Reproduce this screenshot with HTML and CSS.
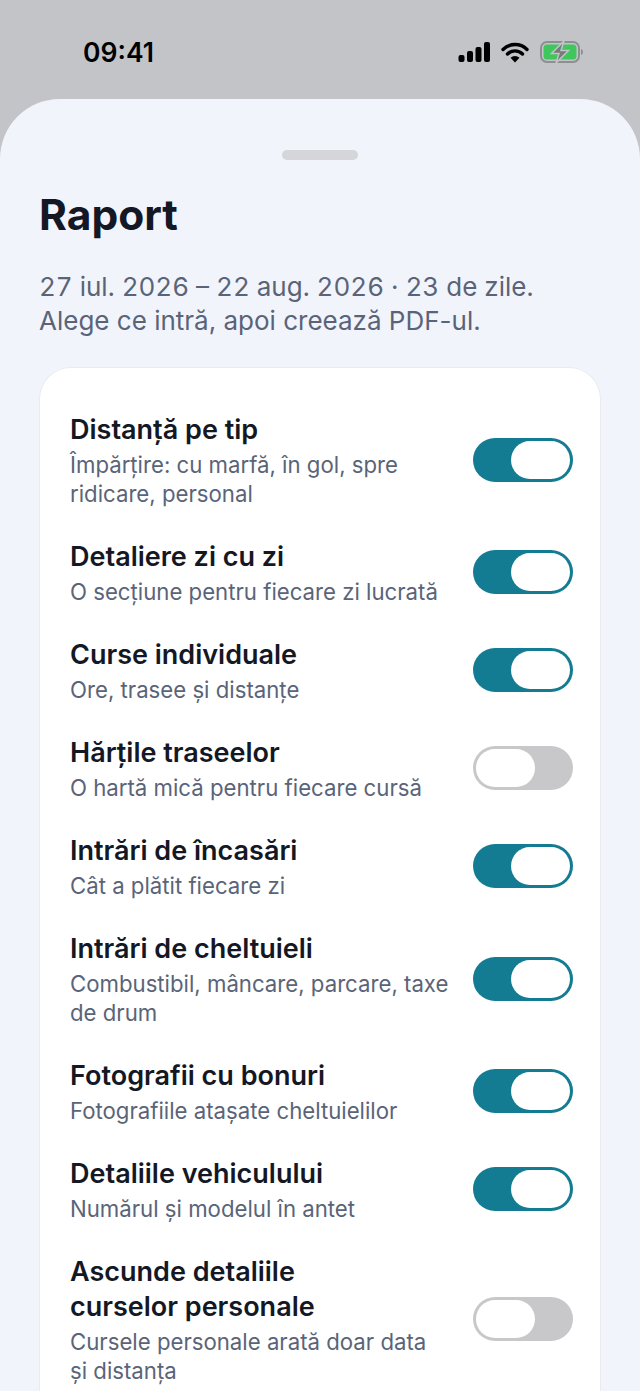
FILE: index.html
```html
<!DOCTYPE html>
<html lang="ro">
<head>
    <meta charset="UTF-8">
    <meta name="viewport" content="width=device-width, initial-scale=1.0">
    <title>Raport</title>
    <link rel="stylesheet" href="styles.css">
</head>
<body>
<!-- Status bar -->
<div class="status-bar">
    <span class="clock">09:41</span>
    <div class="status-icons">
        <svg width="32" height="20" viewBox="0 0 32 20">
            <rect x="0.500" y="13" width="6" height="7" rx="2" fill="#000"/>
            <rect x="9" y="9" width="6" height="11" rx="2" fill="#000"/>
            <rect x="17.500" y="5" width="6" height="15" rx="2" fill="#000"/>
            <rect x="26" y="0" width="6" height="20" rx="2" fill="#000"/>
        </svg>
        <svg width="28" height="21" viewBox="0 0 28 21">
            <path d="M2 7.5a17 17 0 0 1 24 0M6.5 12a10.500 10.500 0 0 1 15 0" fill="none" stroke="#000" stroke-width="3.4" stroke-linecap="round"/>
            <path d="M14 20.500l-4.500-4.800a6.500 6.500 0 0 1 9 0z" fill="#000"/>
        </svg>
        <svg width="44" height="24" viewBox="0 0 44 24">
            <rect x="1" y="2" width="38" height="20" rx="6" fill="none" stroke="#8e8f91" stroke-width="2"/>
            <rect x="3.500" y="4.500" width="33" height="15" rx="3.500" fill="#3fc65c"/>
            <path d="M41 9c1.500.5 2 1.500 2 3s-.5 2.500-2 3z" fill="#8e8f91"/>
            <path d="M24 1L11.500 13.500h7.500l-3 9.500L28.500 10.500h-7.500z" fill="#77797b" stroke="#c3c4c8" stroke-width="1.500"/>
        </svg>
    </div>
</div>

<!-- Report sheet -->
<div class="sheet">
    <div class="handle"></div>
    <h1>Raport</h1>
    <p class="intro"><span class="dates">27 iul. 2026 – 22 aug. 2026 · 23 de zile.</span><br>Alege ce intră, apoi creează PDF-ul.</p>

    <div class="card">
        <div class="row">
            <div class="row-text">
                <div class="row-title">Distanță pe tip</div>
                <div class="row-sub">Împărțire: cu marfă, în gol, spre<br>ridicare, personal</div>
            </div>
            <div class="toggle on"><div class="knob"></div></div>
        </div>
        <div class="row">
            <div class="row-text">
                <div class="row-title">Detaliere zi cu zi</div>
                <div class="row-sub">O secțiune pentru fiecare zi lucrată</div>
            </div>
            <div class="toggle on"><div class="knob"></div></div>
        </div>
        <div class="row">
            <div class="row-text">
                <div class="row-title">Curse individuale</div>
                <div class="row-sub">Ore, trasee și distanțe</div>
            </div>
            <div class="toggle on"><div class="knob"></div></div>
        </div>
        <div class="row">
            <div class="row-text">
                <div class="row-title">Hărțile traseelor</div>
                <div class="row-sub">O hartă mică pentru fiecare cursă</div>
            </div>
            <div class="toggle"><div class="knob"></div></div>
        </div>
        <div class="row">
            <div class="row-text">
                <div class="row-title">Intrări de încasări</div>
                <div class="row-sub">Cât a plătit fiecare zi</div>
            </div>
            <div class="toggle on"><div class="knob"></div></div>
        </div>
        <div class="row">
            <div class="row-text">
                <div class="row-title">Intrări de cheltuieli</div>
                <div class="row-sub">Combustibil, mâncare, parcare, taxe<br>de drum</div>
            </div>
            <div class="toggle on"><div class="knob"></div></div>
        </div>
        <div class="row">
            <div class="row-text">
                <div class="row-title">Fotografii cu bonuri</div>
                <div class="row-sub">Fotografiile atașate cheltuielilor</div>
            </div>
            <div class="toggle on"><div class="knob"></div></div>
        </div>
        <div class="row">
            <div class="row-text">
                <div class="row-title">Detaliile vehiculului</div>
                <div class="row-sub">Numărul și modelul în antet</div>
            </div>
            <div class="toggle on"><div class="knob"></div></div>
        </div>
        <div class="row">
            <div class="row-text">
                <div class="row-title">Ascunde detaliile<br>curselor personale</div>
                <div class="row-sub">Cursele personale arată doar data<br>și distanța</div>
            </div>
            <div class="toggle"><div class="knob"></div></div>
        </div>
    </div>
</div>
</body>
</html>
```

FILE: styles.css
```css
html, body {
    height: 1391px;
}
body {
    margin: 0;
    overflow: hidden;
    background-color: #c3c4c8;
    font-family: Inter, "Noto Sans", sans-serif;
    color: #141824;
}
.status-bar {
    height: 99px;
    box-sizing: border-box;
    padding: 0 56px 0 83px;
    display: flex;
    justify-content: space-between;
    align-items: flex-start;
}
.clock {
    margin-top: 35px;
    font-size: 26.500px;
    line-height: 34px;
    font-weight: 600;
    color: #000;
}
.status-icons {
    margin-top: 40px;
    display: flex;
    align-items: center;
    gap: 11px;
}
.sheet {
    height: 1292px;
    box-sizing: border-box;
    padding: 51px 39px 0;
    display: flex;
    flex-direction: column;
    background-color: #f2f4fc;
    border-radius: 60px 60px 0 0;
}
.handle {
    flex: none;
    width: 76px;
    height: 10px;
    margin: 0 auto;
    background-color: #d5d6da;
    border-radius: 5px;
}
h1 {
    margin: 29px 0 0;
    font-size: 42.500px;
    line-height: 52px;
    font-weight: 700;
}
.intro {
    margin: 29px 0 0;
    font-size: 26px;
    line-height: 34px;
    color: #5a6478;
}
.dates {
    font-variant-numeric: tabular-nums;
}
.card {
    flex: 1;
    margin-top: 29px;
    padding: 44px 27px 0 30px;
    background-color: #fff;
    border: 1px solid #e9ebf1;
    border-bottom: none;
    border-radius: 32px 32px 0 0;
}
.row {
    display: flex;
    align-items: center;
    justify-content: space-between;
    gap: 20px;
    margin-bottom: 31px;
}
.row:last-child {
    margin-bottom: 0;
}
.row-text {
    flex: 1;
    min-width: 0;
}
.row-title {
    font-size: 27px;
    line-height: 35px;
    font-weight: 600;
}
.row-sub {
    margin-top: 3px;
    font-size: 22.200px;
    line-height: 29px;
    color: #5a6478;
}
.toggle {
    flex: none;
    width: 100px;
    height: 44px;
    margin-bottom: 1px;
    box-sizing: border-box;
    padding: 3px;
    display: flex;
    justify-content: flex-start;
    background-color: #c8c8ca;
    border-radius: 22px;
}
.toggle.on {
    justify-content: flex-end;
    background-color: #137c93;
}
.knob {
    width: 59px;
    height: 38px;
    background-color: #fff;
    border-radius: 19px;
}
```
